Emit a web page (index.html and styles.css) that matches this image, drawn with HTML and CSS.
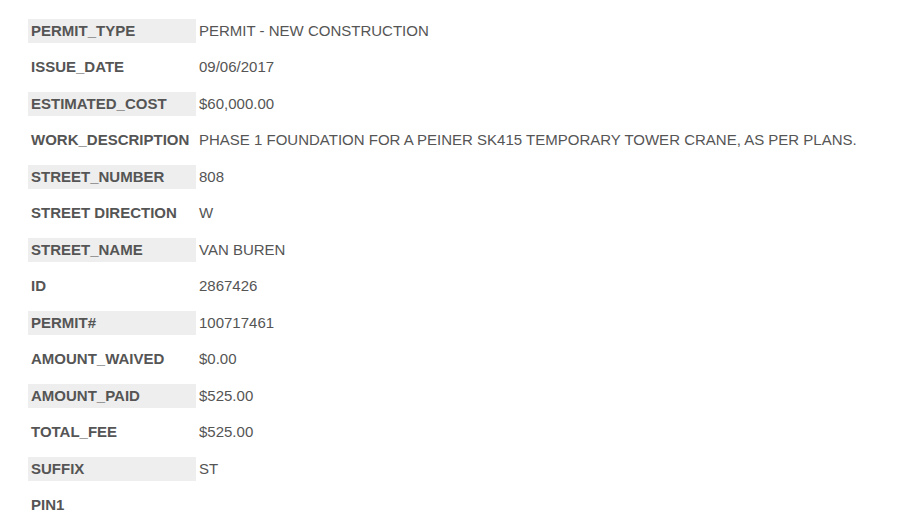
FILE: index.html
```html
<!DOCTYPE html>
<html>
<head>
<meta charset="utf-8">
<link rel="stylesheet" href="styles.css">
</head>
<body>
<div class="props">
  <div class="k alt">PERMIT_TYPE</div><div class="v">PERMIT - NEW CONSTRUCTION</div>
  <div class="k">ISSUE_DATE</div><div class="v">09/06/2017</div>
  <div class="k alt">ESTIMATED_COST</div><div class="v">$60,000.00</div>
  <div class="k">WORK_DESCRIPTION</div><div class="v">PHASE 1 FOUNDATION FOR A PEINER SK415 TEMPORARY TOWER CRANE, AS PER PLANS.</div>
  <div class="k alt">STREET_NUMBER</div><div class="v">808</div>
  <div class="k">STREET DIRECTION</div><div class="v">W</div>
  <div class="k alt">STREET_NAME</div><div class="v">VAN BUREN</div>
  <div class="k">ID</div><div class="v">2867426</div>
  <div class="k alt">PERMIT#</div><div class="v">100717461</div>
  <div class="k">AMOUNT_WAIVED</div><div class="v">$0.00</div>
  <div class="k alt">AMOUNT_PAID</div><div class="v">$525.00</div>
  <div class="k">TOTAL_FEE</div><div class="v">$525.00</div>
  <div class="k alt">SUFFIX</div><div class="v">ST</div>
  <div class="k">PIN1</div><div class="v"></div>
</div>
</body>
</html>
```
FILE: styles.css
```css
html, body {
  margin: 0;
  padding: 0;
  background: #fff;
}
body {
  font-family: "Liberation Sans", Arial, sans-serif;
  font-size: 15px;
  color: #555;
}
.props {
  display: grid;
  grid-template-columns: 168px auto;
  grid-auto-rows: 24px;
  row-gap: 12.47px;
  padding: 19px 0 0 28px;
}
.k, .v {
  padding: 0 3px;
  line-height: 24px;
  white-space: nowrap;
}
.k {
  font-weight: bold;
}
.alt {
  background: #eeeeee;
}
```
